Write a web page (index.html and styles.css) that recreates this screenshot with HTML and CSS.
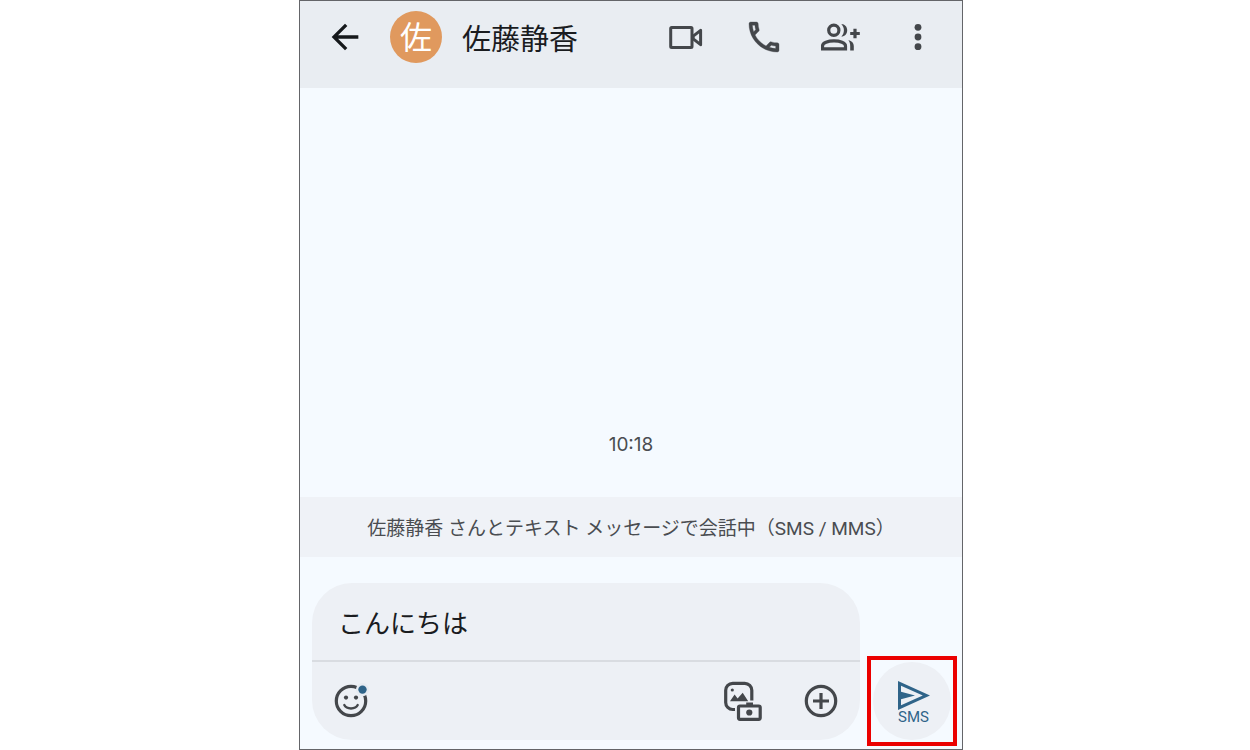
FILE: index.html
```html
<!DOCTYPE html>
<html lang="ja">
<head>
    <meta charset="UTF-8">
    <meta name="viewport" content="width=device-width, initial-scale=1.0">
    <title>佐藤静香</title>
    <link rel="stylesheet" href="styles.css">
</head>
<body>
    <div class="phone">
        <header class="header">
            <button type="button" class="icon-btn back" aria-label="戻る">
                <svg width="40" height="40" viewBox="0 0 24 24" fill="currentColor"><path d="M20 11H7.83l5.59-5.59L12 4l-8 8 8 8 1.41-1.41L7.83 13H20v-2z"/></svg>
            </button>
            <div class="avatar">佐</div>
            <h1 class="name">佐藤静香</h1>
            <div class="actions">
                <button type="button" class="icon-btn" aria-label="ビデオ通話">
                    <svg width="40" height="40" viewBox="0 0 40 40" fill="none" stroke="currentColor" stroke-width="3" stroke-linejoin="round">
                        <rect x="3.7" y="10.5" width="21.3" height="20" rx="1"/>
                        <path d="M26.2 19.2L33.6 13.3V27.7L26.2 21.8z"/>
                    </svg>
                </button>
                <button type="button" class="icon-btn" aria-label="電話">
                    <svg width="40" height="40" viewBox="0 0 24 24" fill="currentColor" stroke="currentColor" stroke-width=".2"><path d="M6.54 5c.06.89.21 1.76.45 2.59l-1.2 1.2c-.41-1.2-.67-2.47-.76-3.79h1.51m9.86 12.02c.85.24 1.72.39 2.6.45v1.49c-1.32-.09-2.59-.35-3.8-.75l1.2-1.19M7.5 3H4c-.55 0-1 .45-1 1 0 9.39 7.61 17 17 17 .55 0 1-.45 1-1v-3.49c0-.55-.45-1-1-1-1.24 0-2.45-.2-3.57-.57-.1-.04-.21-.05-.31-.05-.26 0-.51.1-.71.29l-2.2 2.2c-2.83-1.45-5.15-3.76-6.59-6.59l2.2-2.2c.28-.28.36-.67.25-1.02C8.7 6.45 8.5 5.25 8.5 4c0-.55-.45-1-1-1z"/></svg>
                </button>
                <button type="button" class="icon-btn" aria-label="メンバーを追加">
                    <svg width="40" height="40" viewBox="0 -6.5 40 40" fill="currentColor">
                        <g fill="none" stroke="currentColor" stroke-width="3.2">
                            <circle cx="12.8" cy="6.8" r="5.1"/>
                            <path d="M1.5 25.4V22.4C1.5 19.2 7 17.4 13 17.4S24.5 19.2 24.5 22.4V25.4z"/>
                            <path d="M34 5.2v9.6M29.2 10h9.6"/>
                        </g>
                        <path d="M20.3.5C24 .6 26.2 3.4 26.2 6.8S24 13 20.3 13.1C22 11.3 22.9 9.2 22.9 6.8S22 2.3 20.3.5z"/>
                        <path d="M27.3 16.6C31 17.6 32.8 19.7 32.8 22.4V26.9H29.2V22.4C29.2 20.2 28.6 18.2 27.3 16.6z"/>
                    </svg>
                </button>
                <button type="button" class="icon-btn" aria-label="その他">
                    <svg width="40" height="40" viewBox="0 0 40 40" fill="currentColor"><circle cx="20" cy="10.3" r="3.4"/><circle cx="20" cy="20" r="3.4"/><circle cx="20" cy="29.7" r="3.4"/></svg>
                </button>
            </div>
        </header>

        <main class="messages">
            <time class="time">10:18</time>
        </main>

        <p class="notice">佐藤静香 さんとテキスト メッセージで会話中（SMS / MMS）</p>

        <form class="composer">
            <div class="compose-box">
                <input type="text" class="compose-input" aria-label="メッセージ" value="こんにちは">
                <div class="toolbar">
                    <button type="button" class="icon-btn" aria-label="絵文字">
                        <svg width="40" height="40" viewBox="0 0 40 40" fill="currentColor">
                            <g fill="none" stroke="currentColor" stroke-width="3.2">
                                <circle cx="20" cy="20" r="14.7"/>
                                <path d="M13.3 24C15.6 28.6 24.4 28.6 26.7 24" stroke-width="2.4" stroke-linecap="round"/>
                            </g>
                            <circle cx="15" cy="16.6" r="2.1"/>
                            <circle cx="25" cy="16.6" r="2.1"/>
                            <circle class="halo" cx="31.5" cy="8.6" r="6.6"/>
                            <circle class="dot" cx="31.5" cy="8.6" r="4.2"/>
                        </svg>
                    </button>
                    <button type="button" class="icon-btn gallery" aria-label="写真とカメラ">
                        <svg width="42" height="42" viewBox="0 0 42 42" fill="currentColor">
                            <g fill="none" stroke="currentColor" stroke-width="3.2">
                                <path d="M29.8 20.5V10.3a7 7 0 0 0-7-7H10.7a7 7 0 0 0-7 7V22.5a7 7 0 0 0 7 7H13"/>
                                <rect x="16.5" y="26" width="21.7" height="13.3" rx="1.5"/>
                            </g>
                            <circle cx="10.3" cy="10" r="1.6"/>
                            <path d="M8 21.2L12.6 14.6 15.6 18.6 20.7 12.8 26.2 21.2z"/>
                            <path d="M24.2 22.5H31V25.5H24.2z"/>
                            <circle cx="27.3" cy="32.5" r="3.1"/>
                        </svg>
                    </button>
                    <button type="button" class="icon-btn" aria-label="追加">
                        <svg width="40" height="40" viewBox="0 0 40 40" fill="none" stroke="currentColor" stroke-width="3.2"><circle cx="20" cy="20" r="14.7"/><path d="M20 12v16M12 20h16"/></svg>
                    </button>
                </div>
            </div>
            <button type="submit" class="send">
                <svg width="32" height="29" viewBox="0 0 32 29" fill="currentColor"><path fill-rule="evenodd" d="M0 0L32 14.5 0 29zM3 4.7V10.8L17 14.5 3 18.2V24.3L24.8 14.5z"/></svg>
                <span>SMS</span>
            </button>
        </form>
    </div>
</body>
</html>
```

FILE: styles.css
```css
* {
    margin: 0;
    padding: 0;
    box-sizing: border-box;
}

body {
    font-family: Roboto, "Noto Sans CJK JP", sans-serif;
    background: #fff;
    color: #1a1c1f;
    min-height: 100vh;
    display: flex;
    justify-content: center;
    padding-left: 12px;
}

button,
input {
    font: inherit;
    color: inherit;
    background: none;
    border: none;
}

svg {
    display: block;
}

.phone {
    width: 100%;
    max-width: 664px;
    display: flex;
    flex-direction: column;
    background: #f5faff;
    border: 1px solid #646569;
}

.header {
    display: flex;
    align-items: center;
    padding: 10px 24px 25px 25px;
    background: #e9edf2;
}

.icon-btn {
    color: #44474b;
    cursor: pointer;
}

.back {
    color: #15181b;
}

.avatar {
    width: 52px;
    height: 52px;
    margin-left: 25px;
    border-radius: 50%;
    background: #e0995e;
    color: #fff;
    font-size: 32px;
    line-height: 54px;
    text-align: center;
}

.name {
    margin-left: 20px;
    padding-top: 6px;
    font-size: 29px;
    font-weight: 400;
    line-height: 40px;
}

.actions {
    display: flex;
    gap: 37px;
    margin-left: auto;
}

.messages {
    flex: 1;
    display: flex;
    flex-direction: column;
    justify-content: flex-end;
    padding-bottom: 40px;
}

.time {
    font-family: Inter, sans-serif;
    font-size: 19px;
    line-height: 24px;
    text-align: center;
    color: #4a4d51;
}

.notice {
    padding: 20px 12px 16px;
    background: #eff2f7;
    color: #4a4d51;
    font-size: 19px;
    line-height: 24px;
    text-align: center;
}

.composer {
    display: flex;
    align-items: flex-end;
    gap: 13px;
    padding: 26px 11px 9px 12px;
}

.compose-box {
    flex: 1;
    min-width: 0;
    border-radius: 40px;
    background: #edf0f5;
}

.compose-input {
    display: block;
    width: 100%;
    height: 79px;
    padding: 0 26px;
    border-bottom: 2px solid #d9dce1;
    font-size: 26px;
    outline: none;
}

.toolbar {
    display: flex;
    align-items: center;
    gap: 37px;
    height: 78px;
    padding: 0 19px;
}

.gallery {
    margin-left: auto;
}

.halo {
    fill: #e6ebf1;
}

.dot {
    fill: #2f6489;
}

.send {
    position: relative;
    width: 78px;
    height: 78px;
    padding: 3px 0 0 3px;
    display: flex;
    flex-direction: column;
    align-items: center;
    justify-content: center;
    border-radius: 50%;
    background: #edf0f5;
    color: #2f6489;
    font-size: 15px;
    line-height: 15px;
    cursor: pointer;
}

/* red frame around the send button */
.send::after {
    content: "";
    position: absolute;
    inset: -6px;
    border: 4px solid #eb0000;
}
```
